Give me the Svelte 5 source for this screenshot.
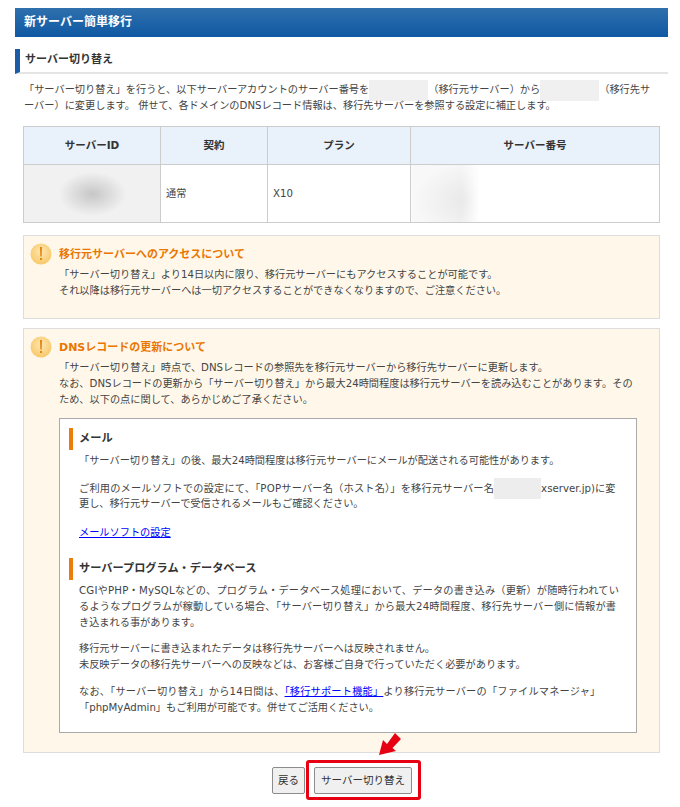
<script>
  const columns = ['サーバーID', '契約', 'プラン', 'サーバー番号'];
</script>

<div class="page">
  <div class="title-bar">新サーバー簡単移行</div>

  <h2 class="section-title">サーバー切り替え</h2>

  <p class="lead">
    「サーバー切り替え」を行うと、以下サーバーアカウントのサーバー番号を<span class="hidden wide"></span>（移行元サーバー）から<span class="hidden wide"></span>（移行先サ<br />ーバー）に変更します。 併せて、各ドメインのDNSレコード情報は、移行先サーバーを参照する設定に補正します。
  </p>

  <table class="server-table">
    <thead>
      <tr>
        {#each columns as col}
          <th>{col}</th>
        {/each}
      </tr>
    </thead>
    <tbody>
      <tr>
        <td class="blur-id"></td>
        <td>通常</td>
        <td>X10</td>
        <td class="blur-no"></td>
      </tr>
    </tbody>
  </table>

  <section class="notice first">
    <div class="notice-head">
      <svg class="alert" viewBox="0 0 22 22" width="22" height="22">
        <defs>
          <radialGradient id="alertFill" cx="50%" cy="40%" r="60%">
            <stop offset="0%" stop-color="#fde7b4" />
            <stop offset="100%" stop-color="#f8c868" />
          </radialGradient>
        </defs>
        <circle cx="11" cy="11" r="10.5" fill="url(#alertFill)" />
        <path d="M10 4h2l-.3 9.5h-1.4z" fill="#e8830c" />
        <rect x="10" y="15" width="2" height="2" fill="#e8830c" />
      </svg>
      <h3>移行元サーバーへのアクセスについて</h3>
    </div>
    <p class="notice-body">
      「サーバー切り替え」より14日以内に限り、移行元サーバーにもアクセスすることが可能です。<br />
      それ以降は移行元サーバーへは一切アクセスすることができなくなりますので、ご注意ください。
    </p>
  </section>

  <section class="notice">
    <div class="notice-head">
      <svg class="alert" viewBox="0 0 22 22" width="22" height="22">
        <circle cx="11" cy="11" r="10.5" fill="url(#alertFill)" />
        <path d="M10 4h2l-.3 9.5h-1.4z" fill="#e8830c" />
        <rect x="10" y="15" width="2" height="2" fill="#e8830c" />
      </svg>
      <h3>DNSレコードの更新について</h3>
    </div>
    <p class="notice-body">
      「サーバー切り替え」時点で、DNSレコードの参照先を移行元サーバーから移行先サーバーに更新します。<br />
      なお、DNSレコードの更新から「サーバー切り替え」から最大24時間程度は移行元サーバーを読み込むことがあります。その<br />
      ため、以下の点に関して、あらかじめご了承ください。
    </p>

    <div class="detail">
      <h4>メール</h4>
      <p>「サーバー切り替え」の後、最大24時間程度は移行元サーバーにメールが配送される可能性があります。</p>
      <p>
        <span class="loose">ご利用のメールソフトでの設定にて、「POPサーバー名（ホスト名）」を移行元サーバー名</span><span class="hidden mail"></span>xserver.jp)に変<br />
        更し、移行元サーバーで受信されるメールもご確認ください。
      </p>
      <p><a href="#mail">メールソフトの設定</a></p>

      <h4 class="second">サーバープログラム・データベース</h4>
      <p>
        <span class="loose">CGIやPHP・MySQLなどの、プログラム・データベース処理において、データの書き込み（更新）が随時行われてい</span><br />
        <span class="loose">るようなプログラムが稼動している場合、「サーバー切り替え」から最大24時間程度、移行先サーバー側に情報が書</span><br />
        き込まれる事があります。
      </p>
      <p>
        移行元サーバーに書き込まれたデータは移行先サーバーへは反映されません。<br />
        未反映データの移行先サーバーへの反映などは、お客様ご自身で行っていただく必要があります。
      </p>
      <p>
        <span class="loose">なお、「サーバー切り替え」から14日間は、<a href="#support">「移行サポート機能」</a>より移行元サーバーの「ファイルマネージャ」</span><br />
        「phpMyAdmin」もご利用が可能です。併せてご活用ください。
      </p>
    </div>
  </section>

  <div class="actions">
    <button class="back">戻る</button>
    <button class="switch">サーバー切り替え</button>
    <span class="highlight"></span>
    <svg class="arrow" viewBox="0 0 24 26" width="24" height="26">
      <path d="M1 24 L5 9 L9 13 L17 2 L23 8 L14.5 17 L18 20 Z" fill="#e60012" />
    </svg>
  </div>
</div>

<style>
  :global(body) {
    margin: 0;
    background: #fff;
  }
  .page {
    width: 680px;
    height: 807px;
    box-sizing: border-box;
    padding: 8px 12px 0 15px;
    overflow: hidden;
    font-family: "DejaVu Sans", "Noto Sans CJK JP", sans-serif;
    font-size: 10.2px;
    line-height: 15.7px;
    color: #444;
  }
  .title-bar {
    height: 29px;
    line-height: 29px;
    padding-left: 9px;
    background: linear-gradient(#2f70ad, #0f58a3);
    color: #fff;
    font-size: 12px;
    font-weight: 700;
  }
  .section-title {
    margin: 12px 0 0;
    height: 23px;
    line-height: 22px;
    padding-left: 5px;
    border-left: 5px solid #1c5ba5;
    border-bottom: 2px solid #e4e4e4;
    font-size: 11px;
    font-weight: 700;
    color: #333;
  }
  .lead {
    margin: 8px 0 0 9px;
    white-space: nowrap;
  }
  .hidden {
    display: inline-block;
    height: 21px;
    margin: -4px 0;
    vertical-align: middle;
    background: #f0f0f0;
  }
  .wide {
    width: 59px;
  }
  .mail {
    width: 47px;
    background: #ededed;
  }
  .loose {
    letter-spacing: 0.2px;
  }
  .server-table {
    margin: 13px 0 0 8px;
    width: 637px;
    border-collapse: collapse;
    table-layout: fixed;
    border: 1px solid #ccc;
  }
  th,
  td {
    border: 1px solid #ccc;
    padding: 0 5px;
  }
  th {
    height: 37px;
    background: #e9f1fa;
    color: #333;
    font-size: 10.5px;
    font-weight: 700;
  }
  th:nth-child(1) {
    width: 126px;
  }
  th:nth-child(2) {
    width: 96px;
  }
  th:nth-child(3) {
    width: 132px;
  }
  td {
    height: 57px;
  }
  .blur-id {
    background: radial-gradient(ellipse 34px 22px at 50% 50%, #c6c6c6, #f1f1f1);
  }
  .blur-no {
    background:
      linear-gradient(90deg, rgba(255, 255, 255, 0) 50px, #fff 68px),
      radial-gradient(ellipse 60px 40px at 25% 62%, #e6e6e6, #f8f8f8);
  }
  .notice {
    margin: 12px 0 0 8px;
    width: 637px;
    box-sizing: border-box;
    background: #fff8ea;
    border: 1px solid #ddd;
    padding: 7px 23px 20px 6px;
  }
  .notice.first {
    height: 84px;
  }
  .notice + .notice {
    margin-top: 9px;
    height: 425px;
  }
  .notice-head {
    display: flex;
    align-items: center;
    gap: 7px;
  }
  .notice-head h3 {
    margin: 0;
    font-size: 11px;
    font-weight: 700;
    color: #ea7600;
  }
  .notice-body {
    margin: 2px 0 0 29px;
    white-space: nowrap;
  }
  .detail {
    margin: 10px 0 0 29px;
    width: 578px;
    height: 315px;
    box-sizing: border-box;
    background: #fff;
    border: 1px solid #aaa;
    padding: 9px 9px 0 9px;
    white-space: nowrap;
  }
  .detail p {
    margin: 0 0 12.5px 10px;
  }
  .detail .second ~ p {
    margin-bottom: 11px;
  }
  .detail h4 {
    margin: 0 0 3px;
    height: 22px;
    line-height: 22px;
    padding-left: 6px;
    border-left: 4px solid #ea7d0b;
    font-size: 11.2px;
    font-weight: 700;
    color: #333;
  }
  .detail h4.second {
    margin-top: 18px;
    margin-bottom: 3px;
  }
  .detail a {
    color: #00f;
  }
  .actions {
    position: relative;
    display: flex;
    justify-content: flex-start;
    gap: 9px;
    margin: 14px 0 0 257px;
  }
  button {
    height: 27px;
    padding: 0;
    border: 1px solid #8c8c8c;
    border-radius: 2px;
    background: #f0f0f0;
    font: inherit;
    font-size: 10.5px;
    color: #333;
  }
  .back {
    width: 33px;
  }
  .switch {
    width: 98px;
  }
  .highlight {
    position: absolute;
    left: 34px;
    top: -7px;
    width: 115px;
    height: 40px;
    box-sizing: border-box;
    border: 3px solid #e60012;
    border-radius: 3px;
  }
  .arrow {
    position: absolute;
    left: 106px;
    top: -36px;
  }
</style>
